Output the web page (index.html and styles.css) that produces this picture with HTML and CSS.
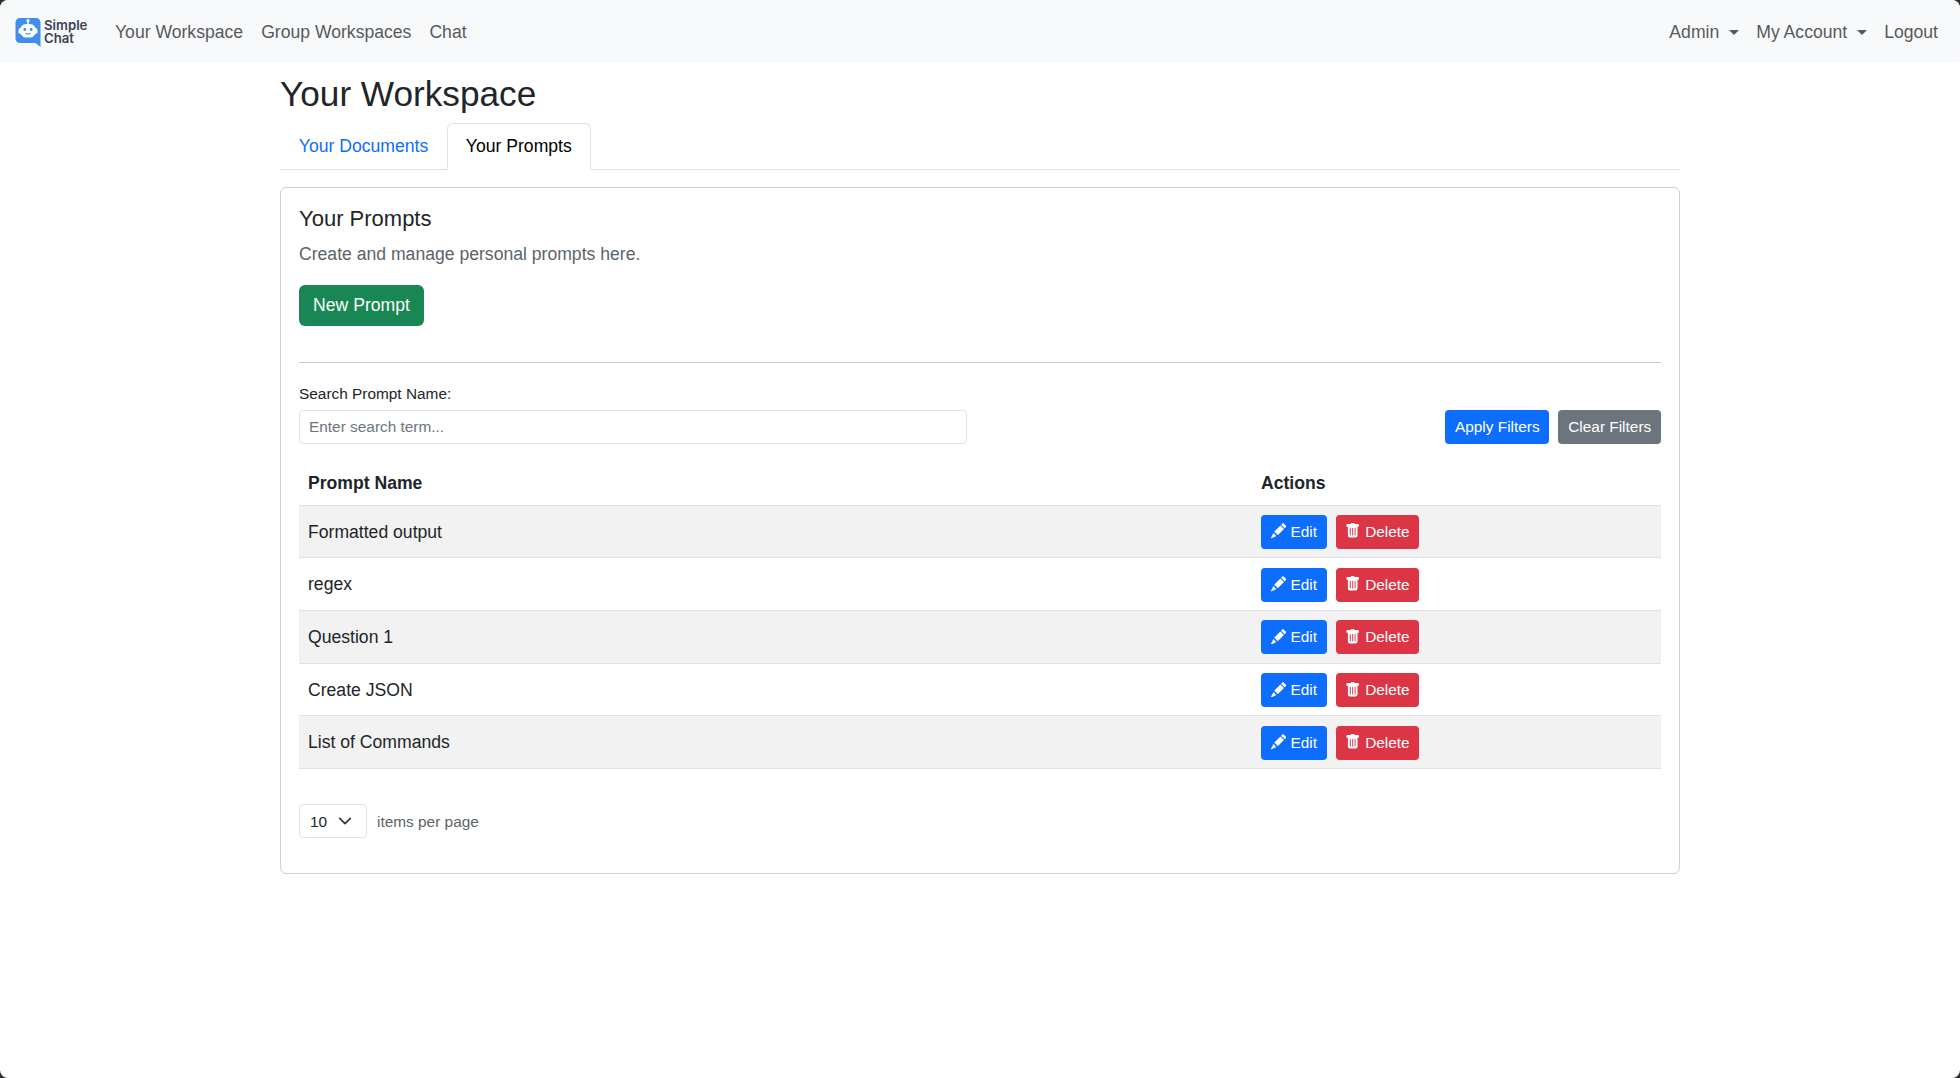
FILE: index.html

```html
<!DOCTYPE html>
<html lang="en">
<head>
    <meta charset="UTF-8">
    <meta name="viewport" content="width=device-width, initial-scale=1.0">
    <title>Your Workspace</title>
    <link rel="stylesheet" href="styles.css">
</head>
<body>
    <nav class="navbar">
        <a class="brand" href="#">
            <svg class="brand-icon" width="26" height="29" viewBox="0 0 26 29">
                <path d="M5 0h16a4.500 4.500 0 0 1 4.500 4.500V29l-5-4H5a4.500 4.500 0 0 1-4.500-4.500v-16A4.500 4.500 0 0 1 5 0z" fill="#3f8ee9"/>
                <rect x="12.400" y="2.500" width="1.400" height="4" fill="#fff"/>
                <circle cx="13" cy="2.700" r="1.600" fill="#fff"/>
                <rect x="3.500" y="10" width="19" height="6" rx="2" fill="#fff"/>
                <rect x="5.500" y="6" width="15" height="13.500" rx="5.500" fill="#fff"/>
                <circle cx="9.800" cy="11.500" r="1.400" fill="#3f8ee9"/>
                <circle cx="16.200" cy="11.500" r="1.400" fill="#3f8ee9"/>
                <path d="M10.500 15.200q2.500 1.600 5 0" stroke="#3f8ee9" stroke-width="1.100" fill="none"/>
            </svg>
            <span class="brand-text">Simple<br>Chat</span>
        </a>
        <div class="nav-links">
            <a href="#">Your Workspace</a>
            <a href="#">Group Workspaces</a>
            <a href="#">Chat</a>
        </div>
        <div class="nav-links nav-right">
            <a href="#" class="caret">Admin</a>
            <a href="#" class="caret">My Account</a>
            <a href="#">Logout</a>
        </div>
    </nav>

    <div class="container">
        <h2>Your Workspace</h2>
        <ul class="tabs">
            <li><a href="#">Your Documents</a></li>
            <li><a href="#" class="active">Your Prompts</a></li>
        </ul>

        <div class="card">
            <h5>Your Prompts</h5>
            <p class="muted">Create and manage personal prompts here.</p>
            <button type="button" class="btn btn-green btn-new">New Prompt</button>
            <hr>

            <div class="filters">
                <div class="search-col">
                    <label for="search">Search Prompt Name:</label>
                    <input type="text" id="search" placeholder="Enter search term...">
                </div>
                <div class="filter-buttons">
                    <button type="button" class="btn btn-sm btn-blue">Apply Filters</button>
                    <button type="button" class="btn btn-sm btn-gray">Clear Filters</button>
                </div>
            </div>

            <table>
                <thead>
                    <tr><th>Prompt Name</th><th class="col-actions">Actions</th></tr>
                </thead>
                <tbody>
                    <tr>
                        <td>Formatted output</td>
                        <td>
                            <button type="button" class="btn btn-sm btn-blue"><svg class="ico" viewBox="0 0 16 16"><path d="M12.850.150a.5.500 0 0 0-.700 0L10.500 1.790l3.710 3.710 1.640-1.650a.5.500 0 0 0 0-.700zM13.500 6.210 9.790 2.500 3.290 9H3.500a.5.500 0 0 1 .5.500v.5h.5a.5.500 0 0 1 .5.500v.5h.5a.5.500 0 0 1 .5.500v.5h.5a.5.500 0 0 1 .5.500v.21zM2.530 10.470.030 15.330a.5.500 0 0 0 .640.640l4.860-2.500z" fill="#fff"/></svg> Edit</button>
                            <button type="button" class="btn btn-sm btn-red"><svg class="ico" viewBox="0 0 16 16"><path d="M2.500 1a1 1 0 0 0-1 1v1a1 1 0 0 0 1 1H3v9a2 2 0 0 0 2 2h6a2 2 0 0 0 2-2V4h.5a1 1 0 0 0 1-1V2a1 1 0 0 0-1-1H10a1 1 0 0 0-1-1H7a1 1 0 0 0-1 1zm3 4a.5.500 0 0 1 .5.500v7a.5.500 0 0 1-1 0v-7a.5.500 0 0 1 .5-.5M8 5a.5.500 0 0 1 .5.500v7a.5.500 0 0 1-1 0v-7A.5.500 0 0 1 8 5m3 .5v7a.5.500 0 0 1-1 0v-7a.5.500 0 0 1 1 0" fill="#fff"/></svg> Delete</button>
                        </td>
                    </tr>
                    <tr>
                        <td>regex</td>
                        <td>
                            <button type="button" class="btn btn-sm btn-blue"><svg class="ico" viewBox="0 0 16 16"><path d="M12.850.150a.5.500 0 0 0-.700 0L10.500 1.790l3.710 3.710 1.640-1.650a.5.500 0 0 0 0-.700zM13.500 6.210 9.790 2.500 3.290 9H3.500a.5.500 0 0 1 .5.500v.5h.5a.5.500 0 0 1 .5.500v.5h.5a.5.500 0 0 1 .5.500v.5h.5a.5.500 0 0 1 .5.500v.21zM2.530 10.470.030 15.330a.5.500 0 0 0 .640.640l4.860-2.500z" fill="#fff"/></svg> Edit</button>
                            <button type="button" class="btn btn-sm btn-red"><svg class="ico" viewBox="0 0 16 16"><path d="M2.500 1a1 1 0 0 0-1 1v1a1 1 0 0 0 1 1H3v9a2 2 0 0 0 2 2h6a2 2 0 0 0 2-2V4h.5a1 1 0 0 0 1-1V2a1 1 0 0 0-1-1H10a1 1 0 0 0-1-1H7a1 1 0 0 0-1 1zm3 4a.5.500 0 0 1 .5.500v7a.5.500 0 0 1-1 0v-7a.5.500 0 0 1 .5-.5M8 5a.5.500 0 0 1 .5.500v7a.5.500 0 0 1-1 0v-7A.5.500 0 0 1 8 5m3 .5v7a.5.500 0 0 1-1 0v-7a.5.500 0 0 1 1 0" fill="#fff"/></svg> Delete</button>
                        </td>
                    </tr>
                    <tr>
                        <td>Question 1</td>
                        <td>
                            <button type="button" class="btn btn-sm btn-blue"><svg class="ico" viewBox="0 0 16 16"><path d="M12.850.150a.5.500 0 0 0-.700 0L10.500 1.790l3.710 3.710 1.640-1.650a.5.500 0 0 0 0-.700zM13.500 6.210 9.790 2.500 3.290 9H3.500a.5.500 0 0 1 .5.500v.5h.5a.5.500 0 0 1 .5.500v.5h.5a.5.500 0 0 1 .5.500v.5h.5a.5.500 0 0 1 .5.500v.21zM2.530 10.470.030 15.330a.5.500 0 0 0 .640.640l4.860-2.500z" fill="#fff"/></svg> Edit</button>
                            <button type="button" class="btn btn-sm btn-red"><svg class="ico" viewBox="0 0 16 16"><path d="M2.500 1a1 1 0 0 0-1 1v1a1 1 0 0 0 1 1H3v9a2 2 0 0 0 2 2h6a2 2 0 0 0 2-2V4h.5a1 1 0 0 0 1-1V2a1 1 0 0 0-1-1H10a1 1 0 0 0-1-1H7a1 1 0 0 0-1 1zm3 4a.5.500 0 0 1 .5.500v7a.5.500 0 0 1-1 0v-7a.5.500 0 0 1 .5-.5M8 5a.5.500 0 0 1 .5.500v7a.5.500 0 0 1-1 0v-7A.5.500 0 0 1 8 5m3 .5v7a.5.500 0 0 1-1 0v-7a.5.500 0 0 1 1 0" fill="#fff"/></svg> Delete</button>
                        </td>
                    </tr>
                    <tr>
                        <td>Create JSON</td>
                        <td>
                            <button type="button" class="btn btn-sm btn-blue"><svg class="ico" viewBox="0 0 16 16"><path d="M12.850.150a.5.500 0 0 0-.700 0L10.500 1.790l3.710 3.710 1.640-1.650a.5.500 0 0 0 0-.700zM13.500 6.210 9.790 2.500 3.290 9H3.500a.5.500 0 0 1 .5.500v.5h.5a.5.500 0 0 1 .5.500v.5h.5a.5.500 0 0 1 .5.500v.5h.5a.5.500 0 0 1 .5.500v.21zM2.530 10.470.030 15.330a.5.500 0 0 0 .640.640l4.860-2.500z" fill="#fff"/></svg> Edit</button>
                            <button type="button" class="btn btn-sm btn-red"><svg class="ico" viewBox="0 0 16 16"><path d="M2.500 1a1 1 0 0 0-1 1v1a1 1 0 0 0 1 1H3v9a2 2 0 0 0 2 2h6a2 2 0 0 0 2-2V4h.5a1 1 0 0 0 1-1V2a1 1 0 0 0-1-1H10a1 1 0 0 0-1-1H7a1 1 0 0 0-1 1zm3 4a.5.500 0 0 1 .5.500v7a.5.500 0 0 1-1 0v-7a.5.500 0 0 1 .5-.5M8 5a.5.500 0 0 1 .5.500v7a.5.500 0 0 1-1 0v-7A.5.500 0 0 1 8 5m3 .5v7a.5.500 0 0 1-1 0v-7a.5.500 0 0 1 1 0" fill="#fff"/></svg> Delete</button>
                        </td>
                    </tr>
                    <tr>
                        <td>List of Commands</td>
                        <td>
                            <button type="button" class="btn btn-sm btn-blue"><svg class="ico" viewBox="0 0 16 16"><path d="M12.850.150a.5.500 0 0 0-.700 0L10.500 1.790l3.710 3.710 1.640-1.650a.5.500 0 0 0 0-.700zM13.500 6.210 9.790 2.500 3.290 9H3.500a.5.500 0 0 1 .5.500v.5h.5a.5.500 0 0 1 .5.500v.5h.5a.5.500 0 0 1 .5.500v.5h.5a.5.500 0 0 1 .5.500v.21zM2.530 10.470.030 15.330a.5.500 0 0 0 .640.640l4.860-2.500z" fill="#fff"/></svg> Edit</button>
                            <button type="button" class="btn btn-sm btn-red"><svg class="ico" viewBox="0 0 16 16"><path d="M2.500 1a1 1 0 0 0-1 1v1a1 1 0 0 0 1 1H3v9a2 2 0 0 0 2 2h6a2 2 0 0 0 2-2V4h.5a1 1 0 0 0 1-1V2a1 1 0 0 0-1-1H10a1 1 0 0 0-1-1H7a1 1 0 0 0-1 1zm3 4a.5.500 0 0 1 .5.500v7a.5.500 0 0 1-1 0v-7a.5.500 0 0 1 .5-.5M8 5a.5.500 0 0 1 .5.500v7a.5.500 0 0 1-1 0v-7A.5.500 0 0 1 8 5m3 .5v7a.5.500 0 0 1-1 0v-7a.5.500 0 0 1 1 0" fill="#fff"/></svg> Delete</button>
                        </td>
                    </tr>
                </tbody>
            </table>

            <div class="pager">
                <div class="select-box">
                    <span>10</span>
                    <svg width="14" height="14" viewBox="0 0 16 16"><path d="m2 5 6 6 6-6" fill="none" stroke="#343a40" stroke-width="2" stroke-linecap="round" stroke-linejoin="round"/></svg>
                </div>
                <span class="pager-label">items per page</span>
            </div>
        </div>
    </div>
</body>
</html>
```

FILE: styles.css

```css
* { box-sizing: border-box; }
html { background: #2e2e2e; }
body { font-family: "Liberation Sans", Arial, sans-serif; font-size: 17.6px; line-height: 1.5; color: #212529; background: #fff; margin: 0; min-height: 100vh; border-radius: 8px; }
a { text-decoration: none; }

.navbar { display: flex; align-items: center; height: 63px; background: #f8f9fa; padding: 1px 22px 0 15px; border-radius: 8px 8px 0 0; }
.brand { display: flex; align-items: center; gap: 3px; width: 100px; }
.brand-icon { display: block; }
.brand-text { font-family: "Inter", sans-serif; font-weight: 600; font-size: 13.200px; line-height: 13.500px; color: #3a4452; }
.nav-links { display: flex; gap: 18px; }
.nav-links a { color: #58595b; font-size: 17.6px; }
.nav-right { margin-left: auto; gap: 17px; }
.caret::after { content: ""; display: inline-block; margin-left: 10px; vertical-align: 3px; border-top: 5.300px solid; border-left: 5.300px solid transparent; border-right: 5.300px solid transparent; }

.container { width: 1400px; margin: 0 auto; }
h2 { font-size: 35.200px; font-weight: 400; line-height: 42px; margin: 10px 0 8px; }
.tabs { display: flex; list-style: none; margin: 0; padding: 0; border-bottom: 1px solid #dee2e6; height: 47px; }
.tabs a { display: block; height: 47px; padding: 9px 17.800px; color: #0d6efd; border: 1px solid transparent; border-radius: 6px 6px 0 0; }
.tabs a.active { color: #000; background: #fff; border-color: #dee2e6 #dee2e6 #fff; }

.card { border: 1px solid #ced0d2; border-radius: 6px; margin-top: 17px; padding: 18px 18px 35px; height: 687px; }
h5 { font-size: 22px; font-weight: 400; line-height: 26px; margin: 0 0 9px; }
.muted { color: #5c636a; margin: 0 0 18px; line-height: 26px; }
.btn { display: inline-block; border: 1px solid transparent; color: #fff; font-family: inherit; border-radius: 6px; }
.btn-new { height: 41px; width: 125px; font-size: 17.6px; padding: 0; }
.btn-sm { height: 34px; font-size: 15.400px; padding: 0 8.800px; border-radius: 4px; }
.btn-green { background: #198754; }
.btn-blue { background: #0d6efd; }
.btn-gray { background: #6c757d; }
.btn-red { background: #dc3545; }
.ico { width: 15.400px; height: 15.400px; vertical-align: -2px; }

hr { border: 0; border-top: 1px solid #c8c8c8; margin: 36px 0 19px; }

.filters { display: flex; justify-content: space-between; align-items: flex-end; }
.search-col { width: 668px; }
label { display: block; font-size: 15.400px; line-height: 23px; margin-bottom: 5px; }
input { display: block; width: 100%; height: 34px; padding: 0 9px; font-family: inherit; font-size: 15.400px; border: 1px solid #dee2e6; border-radius: 4px; color: #212529; }
input::placeholder { color: #6c757d; }
.filter-buttons { display: flex; gap: 9px; }

table { width: 100%; border-collapse: collapse; margin-top: 13px; }
th { text-align: left; font-weight: 700; height: 48px; padding: 4px 9px 0; border-bottom: 1px solid #dee2e6; }
.col-actions { width: 409px; }
td { height: 52.700px; padding: 1px 9px 0; border-bottom: 1px solid #dee2e6; }
tbody tr:nth-child(odd) td { background: #f2f2f2; }
td .btn + .btn { margin-left: 4px; }

.pager { display: flex; align-items: center; gap: 10px; margin-top: 35.500px; }
.select-box { display: flex; align-items: center; justify-content: space-between; width: 68px; height: 34px; padding: 0 14px 0 10px; border: 1px solid #dee2e6; border-radius: 4px; font-size: 15.400px; }
.pager-label { font-size: 15.400px; color: #5c636a; }
```
